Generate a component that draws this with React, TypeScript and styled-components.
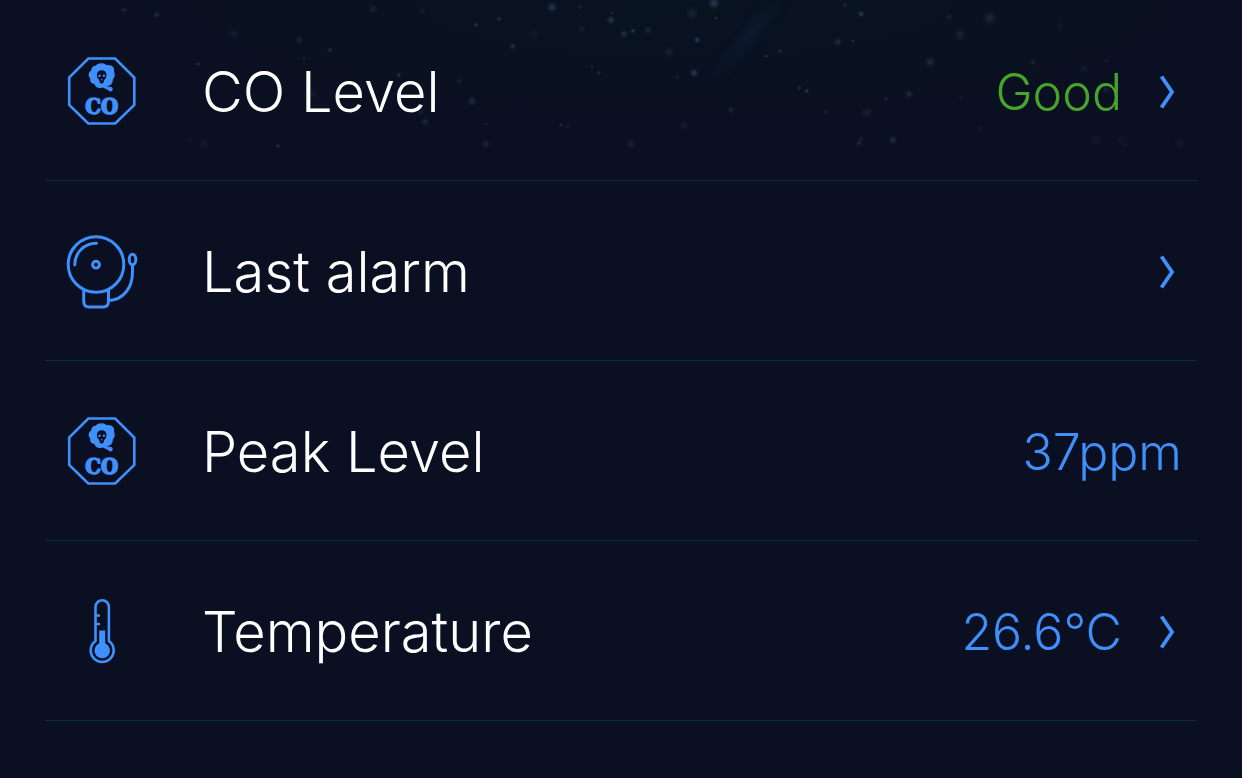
import React from "react";
import styled, { createGlobalStyle } from "styled-components";

const BLUE = "#3f8ffd";
const GREEN = "#46a52a";

const GlobalStyle = createGlobalStyle`
  * { box-sizing: border-box; }
  body {
    margin: 0;
    background: #0a1021;
    font-family: Inter, "Liberation Sans", sans-serif;
    font-weight: 300;
  }
`;

const Page = styled.main`
  position: relative;
  min-height: 100vh;
  padding: 1px 45px 0;
`;

const Sky = styled.svg`
  position: absolute;
  top: 0;
  left: 0;
  width: 100%;
  height: 148px;
`;

const List = styled.ul`
  position: relative;
  list-style: none;
  margin: 0;
  padding: 0;
`;

const Item = styled.li`
  height: 180px;
  border-bottom: 1px solid #0e2a4a;
`;

const Row = styled.div`
  display: flex;
  align-items: center;
  width: 100%;
  height: 100%;
  padding: 4px 15px 0 20px;
  border: 0;
  background: none;
  font: inherit;
  text-align: left;
`;

const IconBox = styled.span`
  display: flex;
  justify-content: center;
  width: 74px;
  margin-right: 63px;
`;

const Label = styled.span`
  flex: 1;
  color: #fff;
  font-size: 56px;
  line-height: 71px;
`;

const Value = styled.span<{ $color: string }>`
  color: ${(p) => p.$color};
  font-size: 50px;
  line-height: 63px;
`;

const ChevronSvg = styled.svg`
  margin: 0 6px 0 36px;
`;

const Chevron = () => (
  <ChevronSvg width="18" height="37" viewBox="0 0 18 37" fill="none" aria-hidden="true">
    <path d="M3.500 2.500L14 18L3.500 33.500" stroke={BLUE} strokeWidth="3.800" />
  </ChevronSvg>
);

const CoIcon = () => (
  <svg width="74" height="73" viewBox="0 1 74 73" aria-hidden="true">
    <path d="M23.300 3.500H50.200L69.300 22.500V50L50.200 68.500H23.300L4.200 50V22.500Z" fill="none" stroke={BLUE} strokeWidth="2.600" />
    <path
      fill={BLUE}
      fillRule="evenodd"
      d="M30.500 10.800C33 7.600 39 7.600 41.500 10.200C46 9 50 12 49 16.500C50.500 19.500 49.500 23 47.800 24.500C48 28.500 45.500 31 42 31C42.500 32 44 31.600 45.200 31.800C48.500 32 48.500 36.500 45.500 36.500C43.500 36.300 43.500 34.500 41.500 34.200C39.500 34 39.500 32.500 38 32.500C34 34.300 30 32.300 29.500 29C26 28.500 24.500 26 25.400 23.500C22.500 21 23.500 16.500 26.400 15.600C26 13 28 10.800 30.500 10.800ZM36.700 15.200C33.200 15.200 31.700 17.600 32 20.800C32.200 23.800 34.200 24 34.600 26.400C35 29.200 38.400 29.200 38.800 26.400C39.200 24 41.200 23.800 41.400 20.800C41.700 17.600 40.200 15.200 36.700 15.200Z"
    />
    <g fill={BLUE}>
      <circle cx="34.500" cy="20.800" r="1.200" />
      <circle cx="38.900" cy="20.800" r="1.200" />
      <circle cx="36.700" cy="24.800" r="0.800" />
    </g>
    <text
      x="36.700"
      y="59.300"
      textAnchor="middle"
      fill={BLUE}
      stroke={BLUE}
      strokeWidth="1.500"
      fontFamily='"DejaVu Serif Condensed", "DejaVu Serif", serif'
      fontStretch="condensed"
      fontWeight="700"
      fontSize="22"
    >
      CO
    </text>
  </svg>
);

const BellIcon = () => (
  <svg width="74" height="75" viewBox="0 1 74 75" fill="none" stroke={BLUE} strokeWidth="3" aria-hidden="true">
    <circle cx="31" cy="30.500" r="27.800" />
    <circle cx="31" cy="30.700" r="3.400" />
    <path d="M9.800 31A21.300 21.300 0 0 1 31.500 9.200" strokeLinecap="round" />
    <path d="M18.700 56V67Q18.700 73 24 73H38Q43.500 73 43.500 67V56" />
    <ellipse cx="67.500" cy="25.500" rx="3.300" ry="5.200" />
    <path d="M67.500 31V38C67.500 54 58 66 44 66.500" />
  </svg>
);

const ThermometerIcon = () => (
  <svg width="74" height="71" viewBox="0 0 74 71" fill="none" aria-hidden="true">
    <path d="M30.500 44V10A6.700 6.700 0 0 1 43.900 10V44A11.500 11.500 0 1 1 30.500 44Z" stroke={BLUE} strokeWidth="2.600" />
    <path d="M31 18.500H35M31 27H35" stroke={BLUE} strokeWidth="2.500" />
    <path d="M34.200 33.500H40.200V46.200A7.800 7.800 0 1 1 34.200 46.200Z" fill={BLUE} />
  </svg>
);

// x, y, radius, opacity
const stars: [number, number, number, number][] = [
  [124, 10, 3, 0.2], [157, 15, 3, 0.28], [234, 34, 5, 0.12], [299, 40, 3, 0.25],
  [330, 50, 2, 0.35], [198, 64, 2, 0.3], [304, 59, 1, 0.3], [373, 9, 4, 0.18],
  [422, 11, 3, 0.15], [476, 25, 2, 0.4], [499, 19, 2, 0.35], [552, 7, 5, 0.38],
  [580, 7, 2, 0.2], [611, 20, 4, 0.38], [582, 29, 3, 0.15], [513, 46, 3, 0.32],
  [534, 34, 6, 0.08], [399, 75, 2, 0.35], [459, 81, 2, 0.2], [472, 101, 4, 0.28],
  [312, 94, 6, 0.1], [421, 112, 3, 0.16], [425, 122, 4, 0.24], [278, 146, 2, 0.3],
  [486, 124, 2, 0.14], [190, 140, 3, 0.08], [599, 73, 2, 0.25], [592, 67, 1, 0.3],
  [561, 125, 2, 0.22], [568, 127, 2, 0.16], [204, 144, 5, 0.1], [486, 144, 4, 0.2],
  [624, 34, 4, 0.3], [633, 31, 2, 0.4], [648, 30, 3, 0.24], [714, 3, 6, 0.4],
  [692, 13, 6, 0.18], [697, 40, 3, 0.42], [669, 52, 5, 0.18], [694, 73, 4, 0.4],
  [677, 77, 2, 0.2], [861, 14, 3, 0.42], [838, 42, 4, 0.28], [766, 56, 1, 0.5],
  [780, 51, 2, 0.3], [799, 88, 2, 0.3], [807, 91, 2, 0.4], [731, 110, 3, 0.22],
  [684, 125, 4, 0.15], [631, 144, 5, 0.18], [867, 113, 5, 0.18], [826, 112, 2, 0.24],
  [909, 94, 4, 0.26], [886, 99, 2, 0.2], [930, 62, 5, 0.28], [960, 34, 6, 0.18],
  [990, 18, 7, 0.22], [949, 17, 3, 0.2], [859, 143, 3, 0.22], [861, 139, 2, 0.2],
  [893, 140, 4, 0.28], [1033, 62, 3, 0.2], [1084, 69, 4, 0.12], [1106, 89, 4, 0.2],
  [1096, 140, 5, 0.1], [1121, 140, 5, 0.07], [1180, 143, 6, 0.08], [1060, 26, 4, 0.1],
  [1107, 61, 2, 0.14], [961, 98, 2, 0.14], [980, 129, 2, 0.12], [1125, 145, 2, 0.12],
  [612, 13, 1, 0.3], [716, 18, 1, 0.4], [845, 5, 2, 0.24], [853, 41, 1, 0.4],
];

const Starfield = () => (
  <Sky viewBox="0 0 1242 148" preserveAspectRatio="xMidYMin slice" aria-hidden="true">
    <defs>
      <radialGradient id="haze" cx="0.550" cy="0" r="0.550" gradientTransform="scale(1 1.800)">
        <stop offset="0" stopColor="#081320" />
        <stop offset="0.500" stopColor="#091220" stopOpacity="0.700" />
        <stop offset="1" stopColor="#0a1021" stopOpacity="0" />
      </radialGradient>
      <radialGradient id="star">
        <stop offset="0" stopColor="#5f86ae" />
        <stop offset="0.400" stopColor="#41638a" stopOpacity="0.700" />
        <stop offset="1" stopColor="#294568" stopOpacity="0" />
      </radialGradient>
      <linearGradient id="nebula" x1="0" y1="1" x2="1" y2="0">
        <stop offset="0" stopColor="#143566" stopOpacity="0" />
        <stop offset="0.600" stopColor="#143566" stopOpacity="0.280" />
        <stop offset="1" stopColor="#143566" stopOpacity="0" />
      </linearGradient>
      <filter id="soft" x="-0.500" y="-0.500" width="2" height="2" colorInterpolationFilters="sRGB">
        <feGaussianBlur stdDeviation="5" />
      </filter>
    </defs>
    <rect width="1242" height="148" fill="url(#haze)" />
    <path d="M704 84L736 44L770 0H786L756 36L728 70Z" fill="url(#nebula)" filter="url(#soft)" />
    {stars.map(([x, y, r, o], i) => (
      <circle key={i} cx={x} cy={y} r={r + 1} fill="url(#star)" opacity={o} />
    ))}
  </Sky>
);

type Reading = {
  label: string;
  icon: React.ReactNode;
  value?: string;
  color?: string;
  link?: boolean;
};

const readings: Reading[] = [
  { label: "CO Level", icon: <CoIcon />, value: "Good", color: GREEN, link: true },
  { label: "Last alarm", icon: <BellIcon />, link: true },
  { label: "Peak Level", icon: <CoIcon />, value: "37ppm" },
  { label: "Temperature", icon: <ThermometerIcon />, value: "26.6°C", link: true },
];

export default function App() {
  return (
    <>
      <GlobalStyle />
      <Page>
        <Starfield />
        <List>
          {readings.map((r) => (
            <Item key={r.label}>
              <Row as={r.link ? "button" : "div"}>
                <IconBox>{r.icon}</IconBox>
                <Label>{r.label}</Label>
                {r.value && <Value $color={r.color ?? BLUE}>{r.value}</Value>}
                {r.link && <Chevron />}
              </Row>
            </Item>
          ))}
        </List>
      </Page>
    </>
  );
}
